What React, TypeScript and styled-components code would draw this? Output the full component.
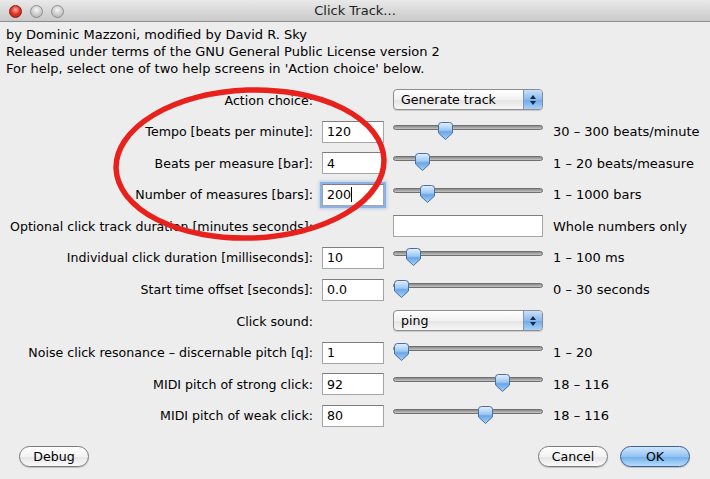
import React from "react";
import styled, { createGlobalStyle } from "styled-components";

const Global = createGlobalStyle`
  html, body { margin: 0; padding: 0; background: #ededed; }
  body { font-family: "DejaVu Sans", "Lucida Grande", sans-serif; font-size: 12px; color: #000; }
`;

const Window = styled.div`
  position: relative;
  width: 710px;
  height: 479px;
  background: #ededed;
  overflow: hidden;
  display: flex;
  flex-direction: column;
`;

const TitleBar = styled.div`
  height: 22px;
  box-sizing: border-box;
  background: linear-gradient(#e9e9e9, #c9c9c9);
  border-bottom: 1px solid #8c8c8c;
  display: flex;
  align-items: center;
  position: relative;
  justify-content: center;
`;

const Lights = styled.div`
  position: absolute;
  left: 9px;
  top: 5px;
  display: flex;
  gap: 8px;
`;

const Light = styled.span<{ $red?: boolean }>`
  width: 13px;
  height: 13px;
  border-radius: 50%;
  box-sizing: border-box;
  background: ${(p) =>
    p.$red
      ? "radial-gradient(circle at 50% 35%, #ffb3ab 0%, #e43a2c 45%, #b01810 100%)"
      : "radial-gradient(circle at 50% 35%, #f6f6f6 0%, #cfcfcf 50%, #a9a9a9 100%)"};
  border: 1px solid ${(p) => (p.$red ? "#8a1a12" : "#8f8f8f")};
`;

const Title = styled.div`
  font-size: 13px;
  color: #1e1e1e;
`;

const Header = styled.div`
  padding: 4px 0 0 6px;
  line-height: 17px;
  font-size: 13px;
`;

const Form = styled.div`
  display: grid;
  grid-template-columns: 313px 62px 150px 1fr;
  column-gap: 9px;
  grid-auto-rows: 22px;
  row-gap: 9.6px;
  margin-top: 12px;
`;

const Label = styled.div`
  grid-column: 1;
  text-align: right;
  white-space: nowrap;
  align-self: center;
  font-size: 12.6px;
`;

const TextBox = styled.div<{ $focus?: boolean; $wide?: boolean }>`
  box-sizing: border-box;
  grid-column: ${(p) => (p.$wide ? "3" : "2")};
  height: 22px;
  background: #fff;
  border: 1px solid #a5a5a5;
  border-top-color: #7d7d7d;
  padding: 0 4px;
  display: flex;
  align-items: center;
  font-size: 12.6px;
  box-shadow: ${(p) => (p.$focus ? "0 0 0 2px #8db2e3, 0 0 3px 3px #b6cdee" : "none")};
`;

const Caret = styled.span`
  display: inline-block;
  width: 1px;
  height: 15px;
  background: #000;
`;

const SliderBox = styled.div`
  grid-column: 3;
  position: relative;
  height: 22px;
`;

const Track = styled.div`
  position: absolute;
  left: 0;
  right: 0;
  top: 4px;
  height: 5px;
  box-sizing: border-box;
  border-radius: 3px;
  border: 1px solid #707070;
  background: linear-gradient(#8a8a8a, #c4c4c4);
`;

const Thumb = styled.svg`
  position: absolute;
  top: 0;
  width: 17px;
  height: 20px;
  margin-left: -8.5px;
`;

const Range = styled.div`
  grid-column: 4;
  align-self: center;
  font-size: 13px;
  white-space: nowrap;
  margin-left: 1px;
`;

const Popup = styled.div`
  grid-column: 3;
  box-sizing: border-box;
  height: 21px;
  border: 1px solid #8d8d8d;
  border-radius: 4px;
  background: linear-gradient(#ffffff, #f1f1f1 50%, #e3e3e3 51%, #f6f6f6);
  display: flex;
  align-items: center;
  overflow: hidden;
  box-shadow: 0 1px 1px rgba(0, 0, 0, 0.15);
`;

const PopupText = styled.div`
  flex: 1;
  padding-left: 7px;
  font-size: 12.6px;
`;

const PopupArrows = styled.div`
  width: 18px;
  align-self: stretch;
  border-left: 1px solid #7e94b8;
  background: linear-gradient(#c9e0fa, #8ab9ed 50%, #6ea7e8 51%, #a9d1fb);
  display: flex;
  align-items: center;
  justify-content: center;
`;

const Footer = styled.div`
  margin-top: auto;
  display: flex;
  align-items: center;
  padding: 0 20px 12px 19px;
  gap: 12px;
`;

const Spacer = styled.div`
  flex: 1;
`;

const Button = styled.button<{ $default?: boolean }>`
  width: 70px;
  height: 21px;
  border-radius: 11px;
  font-family: "DejaVu Sans", sans-serif;
  font-size: 12.6px;
  color: #000;
  padding: 0;
  border: 1px solid ${(p) => (p.$default ? "#3e5f93" : "#7b7b7b")};
  background: ${(p) =>
    p.$default
      ? "linear-gradient(#cfe6fd, #93c3f3 50%, #6fade9 51%, #b6dcfc)"
      : "linear-gradient(#ffffff, #f3f3f3 50%, #e4e4e4 51%, #f9f9f9)"};
  box-shadow: 0 1px 1px rgba(0, 0, 0, 0.2);
`;

const Overlay = styled.svg`
  position: absolute;
  left: 0;
  top: 0;
  pointer-events: none;
`;

function ThumbIcon({ x }: { x: number }) {
  return (
    <Thumb viewBox="0 0 17 20" style={{ left: `${x}px` }}>
      <defs>
        <linearGradient id="tg" x1="0" y1="0" x2="0" y2="1">
          <stop offset="0" stopColor="#e4f1ff" />
          <stop offset="0.45" stopColor="#9cc8f4" />
          <stop offset="0.55" stopColor="#6aa6e6" />
          <stop offset="1" stopColor="#a6d2fb" />
        </linearGradient>
      </defs>
      <path
        d="M1.5 4.5 Q1.5 1.5 4.5 1.5 H12.5 Q15.5 1.5 15.5 4.5 V12 L8.5 18.5 L1.5 12 Z"
        fill="url(#tg)"
        stroke="#4c6e9c"
        strokeWidth="1"
      />
    </Thumb>
  );
}

function Slider({ value, min, max }: { value: number; min: number; max: number }) {
  const frac = (value - min) / (max - min);
  const x = 8 + frac * 134;
  return (
    <SliderBox>
      <Track />
      <ThumbIcon x={x} />
    </SliderBox>
  );
}

function PopupArrowIcon() {
  return (
    <svg width="8" height="12" viewBox="0 0 8 12">
      <path d="M4 1 L7 5 H1 Z" fill="#1a2a40" />
      <path d="M4 11 L7 7 H1 Z" fill="#1a2a40" />
    </svg>
  );
}

type Row =
  | { kind: "popup"; label: string; value: string }
  | { kind: "slider"; label: string; value: string; min: number; max: number; range: string; focus?: boolean }
  | { kind: "text"; label: string; range: string };

const rows: Row[] = [
  { kind: "popup", label: "Action choice:", value: "Generate track" },
  { kind: "slider", label: "Tempo [beats per minute]:", value: "120", min: 30, max: 300, range: "30 – 300 beats/minute" },
  { kind: "slider", label: "Beats per measure [bar]:", value: "4", min: 1, max: 20, range: "1 – 20 beats/measure" },
  { kind: "slider", label: "Number of measures [bars]:", value: "200", min: 1, max: 1000, range: "1 – 1000 bars", focus: true },
  { kind: "text", label: "Optional click track duration [minutes seconds]:", range: "Whole numbers only" },
  { kind: "slider", label: "Individual click duration [milliseconds]:", value: "10", min: 1, max: 100, range: "1 – 100 ms" },
  { kind: "slider", label: "Start time offset [seconds]:", value: "0.0", min: 0, max: 30, range: "0 – 30 seconds" },
  { kind: "popup", label: "Click sound:", value: "ping" },
  { kind: "slider", label: "Noise click resonance – discernable pitch [q]:", value: "1", min: 1, max: 20, range: "1 – 20" },
  { kind: "slider", label: "MIDI pitch of strong click:", value: "92", min: 18, max: 116, range: "18 – 116" },
  { kind: "slider", label: "MIDI pitch of weak click:", value: "80", min: 18, max: 116, range: "18 – 116" },
];

export default function App() {
  return (
    <Window>
      <Global />
      <TitleBar>
        <Lights>
          <Light $red />
          <Light />
          <Light />
        </Lights>
        <Title>Click Track...</Title>
      </TitleBar>
      <Header>
        <div>by Dominic Mazzoni, modified by David R. Sky</div>
        <div>Released under terms of the GNU General Public License version 2</div>
        <div>For help, select one of two help screens in 'Action choice' below.</div>
      </Header>
      <Form>
        {rows.map((r, i) => {
          if (r.kind === "popup") {
            return (
              <React.Fragment key={i}>
                <Label>{r.label}</Label>
                <Popup>
                  <PopupText>{r.value}</PopupText>
                  <PopupArrows>
                    <PopupArrowIcon />
                  </PopupArrows>
                </Popup>
              </React.Fragment>
            );
          }
          if (r.kind === "text") {
            return (
              <React.Fragment key={i}>
                <Label>{r.label}</Label>
                <TextBox $wide />
                <Range>{r.range}</Range>
              </React.Fragment>
            );
          }
          const v = parseFloat(r.value);
          return (
            <React.Fragment key={i}>
              <Label>{r.label}</Label>
              <TextBox $focus={r.focus}>
                {r.value}
                {r.focus && <Caret />}
              </TextBox>
              <Slider value={v} min={r.min} max={r.max} />
              <Range>{r.range}</Range>
            </React.Fragment>
          );
        })}
      </Form>
      <Footer>
        <Button>Debug</Button>
        <Spacer />
        <Button>Cancel</Button>
        <Button $default>OK</Button>
      </Footer>
      <Overlay width="710" height="479" viewBox="0 0 710 479">
        <ellipse
          cx="250"
          cy="164"
          rx="134"
          ry="74"
          transform="rotate(-2 250 164)"
          fill="none"
          stroke="#e8211d"
          strokeWidth="5.5"
        />
      </Overlay>
    </Window>
  );
}
